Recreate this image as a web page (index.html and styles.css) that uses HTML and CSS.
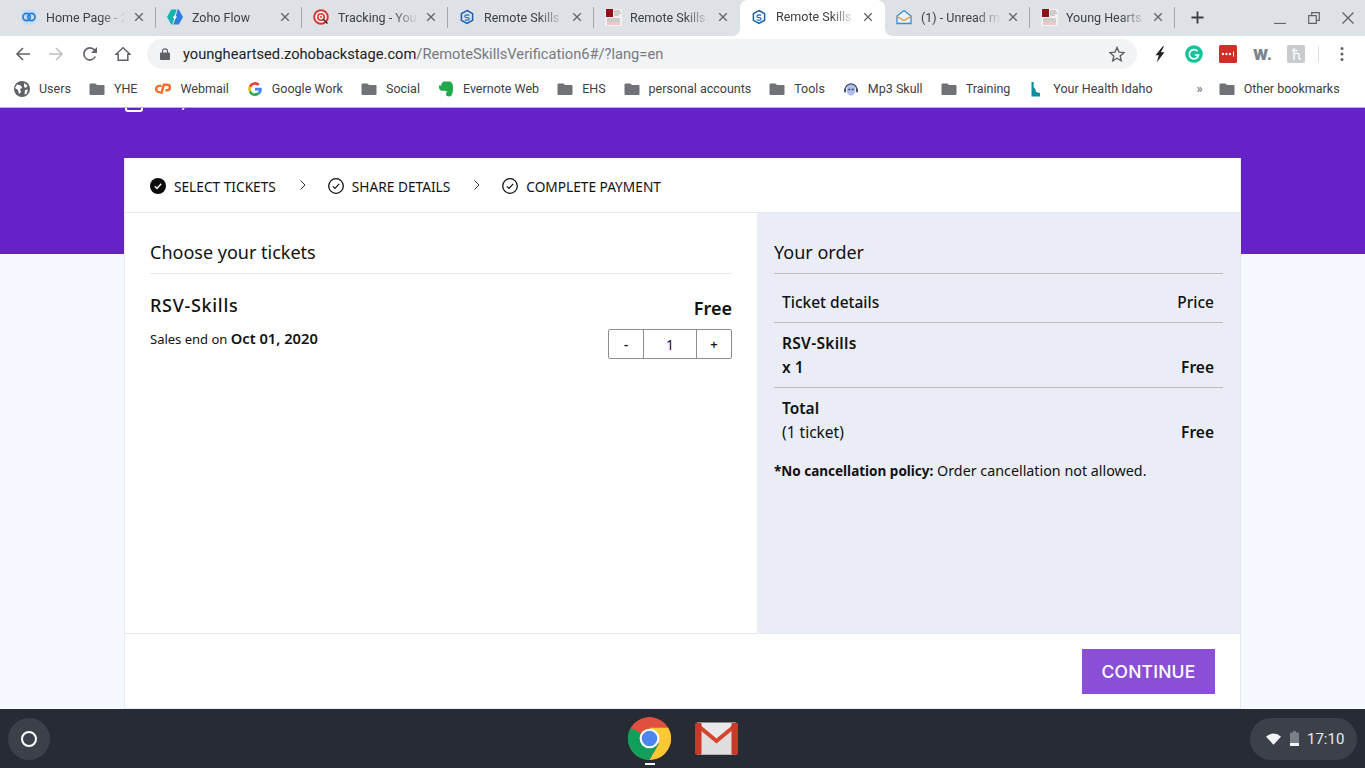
FILE: index.html
```html
<!DOCTYPE html>
<html lang="en">
<head>
<meta charset="utf-8">
<title>Remote Skills Verification</title>
<link rel="stylesheet" href="styles.css">
</head>
<body>
<svg class="defs" width="0" height="0" aria-hidden="true">
  <symbol id="x" viewBox="0 0 12 12"><path d="M1.5 1.5l9 9M10.500 1.5l-9 9" fill="none" stroke="#5f6368" stroke-width="1.5"/></symbol>
  <symbol id="folder" viewBox="0 0 16 16"><path d="M1.5 2.500h5l1.500 1.500h6.500a1 1 0 0 1 1 1v8a1 1 0 0 1-1 1h-13a1 1 0 0 1-1-1v-9.500a1 1 0 0 1 1-1z" fill="#6f7276"/></symbol>
  <symbol id="bs" viewBox="0 0 16 16"><path d="M8 1.500l5.600 3.200v6.600L8 14.500l-5.600-3.200V4.700z" fill="none" stroke="#1c5fa8" stroke-width="1.500"/><path d="M10.300 6H7.200a1.300 1.300 0 0 0 0 2.600h1.600a1.300 1.300 0 0 1 0 2.600H5.800" fill="none" stroke="#2a78c8" stroke-width="1.300"/></symbol>
  <symbol id="thumb" viewBox="0 0 17 17"><rect width="17" height="17" fill="#f5efef"/><rect x="1" y="0" width="7" height="8" fill="#8f1218"/><path d="M9 2h6M9 4h7M9 6h5M2 10h13M2 12h13" stroke="#a8a8a8" stroke-width="1"/><rect x="2" y="13" width="13" height="3" fill="#ecc9c9"/></symbol>
  <symbol id="tick" viewBox="0 0 16 16"><circle cx="8" cy="8" r="7.300" fill="none" stroke="#111" stroke-width="1.300"/><path d="M4.800 8.300l2.200 2.200 4.200-4.700" fill="none" stroke="#111" stroke-width="1.200"/></symbol>
  <symbol id="chev" viewBox="0 0 8 12"><path d="M1.500 1.500L6 6l-4.500 4.500" fill="none" stroke="#333" stroke-width="1"/></symbol>
</svg>

<div class="tabstrip">
  <div class="tab">
    <svg class="favicon" viewBox="0 0 16 16"><circle cx="8" cy="8" r="8" fill="#c4dcf5"/><circle cx="5.600" cy="8" r="3.600" fill="none" stroke="#2b7fd0" stroke-width="1.700"/><circle cx="10.400" cy="8" r="3.600" fill="none" stroke="#2b7fd0" stroke-width="1.700"/></svg>
    <span class="tab-title">Home Page - 2</span><svg class="tab-x"><use href="#x"/></svg>
  </div>
  <div class="tab">
    <svg class="favicon" viewBox="0 0 16 16"><path d="M4.200.5H9.500L5.500 15.500H4.200L0 8z" fill="#12b5b0"/><path d="M10.500.5h1.300L16 8l-4.200 7.500H6.500z" fill="#2f7de1"/><path d="M9.800 3L8 7.500h2L6.300 13l1.300-4H5.800z" fill="#fff"/></svg>
    <span class="tab-title">Zoho Flow</span><svg class="tab-x"><use href="#x"/></svg>
  </div>
  <div class="tab">
    <svg class="favicon" viewBox="0 0 16 16"><circle cx="8" cy="8" r="6.800" fill="#fff" stroke="#d9372f" stroke-width="2"/><circle cx="8" cy="8" r="3.200" fill="#fff" stroke="#d9372f" stroke-width="1.600"/><circle cx="8" cy="8" r="1" fill="#d9372f"/><path d="M10 10l4.500 4.500" stroke="#333" stroke-width="1.600"/></svg>
    <span class="tab-title">Tracking - You</span><svg class="tab-x"><use href="#x"/></svg>
  </div>
  <div class="tab">
    <svg class="favicon"><use href="#bs"/></svg>
    <span class="tab-title">Remote Skills</span><svg class="tab-x"><use href="#x"/></svg>
  </div>
  <div class="tab tab-noline">
    <svg class="favicon favicon-thumb"><use href="#thumb"/></svg>
    <span class="tab-title">Remote Skills</span><svg class="tab-x"><use href="#x"/></svg>
  </div>
  <div class="tab tab-narrow tab-active">
    <svg class="favicon"><use href="#bs"/></svg>
    <span class="tab-title">Remote Skills</span><svg class="tab-x"><use href="#x"/></svg>
  </div>
  <div class="tab tab-narrow">
    <svg class="favicon" viewBox="0 0 16 16"><path d="M1 7l7-5.500L15 7v7.500H1z" fill="#e6f1fb" stroke="#3a8ad6" stroke-width="1.300"/><path d="M1 7.500l7 4 7-4" fill="none" stroke="#e8912d" stroke-width="1.300"/></svg>
    <span class="tab-title">(1) - Unread m</span><svg class="tab-x"><use href="#x"/></svg>
  </div>
  <div class="tab tab-narrow">
    <svg class="favicon favicon-thumb"><use href="#thumb"/></svg>
    <span class="tab-title">Young Hearts</span><svg class="tab-x"><use href="#x"/></svg>
  </div>
  <svg class="newtab" viewBox="0 0 14 14"><path d="M7 .5v13M.5 7h13" stroke="#3c4043" stroke-width="2" fill="none"/></svg>
  <div class="winctl">
    <svg viewBox="0 0 12 12" class="win"><path d="M0 11.500h12" stroke="#5f6368" stroke-width="1.200" fill="none"/></svg>
    <svg viewBox="0 0 12 12" class="win"><path d="M.7 3.700h7.600v7.600H.7zM3.700 3.700V.7h7.600v7.600H8.300" stroke="#5f6368" stroke-width="1.200" fill="none"/></svg>
    <svg viewBox="0 0 12 12" class="win"><path d="M.5.500l11 11M11.500.500l-11 11" stroke="#5f6368" stroke-width="1.300" fill="none"/></svg>
  </div>
</div>

<div class="toolbar">
  <svg class="nav" viewBox="0 0 16 16"><path d="M15 8H2M8 2L2 8l6 6" fill="none" stroke="#5f6368" stroke-width="1.600"/></svg>
  <svg class="nav nav-fwd" viewBox="0 0 16 16"><path d="M1 8h13M8 2l6 6-6 6" fill="none" stroke="#bdc1c6" stroke-width="1.600"/></svg>
  <svg class="nav" viewBox="0 0 16 16"><path d="M13.300 10.500A6 6 0 1 1 12.500 4L14.500 6" fill="none" stroke="#5f6368" stroke-width="1.600"/><path d="M15 1v6H9z" fill="#5f6368"/></svg>
  <svg class="nav nav-home" viewBox="0 0 16 16"><path d="M8 1.800L1 8.300h2.200V14.300h9.600V8.300H15z" fill="none" stroke="#5f6368" stroke-width="1.500"/></svg>
  <div class="omnibox">
    <svg class="lock" viewBox="0 0 10 12"><path d="M2.500 5V3.300a2.500 2.500 0 0 1 5 0V5" fill="none" stroke="#5f6368" stroke-width="1.200"/><rect y="4.500" width="10" height="7.500" rx="1" fill="#5f6368"/></svg>
    <span class="url"><span class="url-host">youngheartsed.zohobackstage.com</span>/RemoteSkillsVerification6#/?lang=en</span>
    <svg class="star" viewBox="0 0 16 16"><path d="M8 1.500l2 4.600 5 .5-3.800 3.300 1.100 4.900L8 12.200l-4.300 2.600 1.100-4.900L1 6.600l5-.5z" fill="none" stroke="#5f6368" stroke-width="1.400"/></svg>
  </div>
  <div class="exts">
    <svg class="ext" viewBox="0 0 16 16"><path d="M10.500 1L4 9h3L5 15.500 12 6.500H8.800L11.500 1z" fill="#222"/></svg>
    <svg class="ext" viewBox="0 0 18 18"><circle cx="9" cy="9" r="8.800" fill="#15c39a"/><path d="M12.500 6.300A4.600 4.600 0 1 0 13.500 10H9.800" fill="none" stroke="#fff" stroke-width="1.700"/></svg>
    <svg class="ext" viewBox="0 0 18 18"><rect width="18" height="18" rx="1.500" fill="#d32d27"/><circle cx="4" cy="9" r="1.200" fill="#fff"/><circle cx="7.500" cy="9" r="1.200" fill="#fff"/><circle cx="11" cy="9" r="1.200" fill="#fff"/><path d="M14.500 6.500v5" stroke="#fff" stroke-width="1"/></svg>
    <span class="ext-w">W.</span>
    <svg class="ext ext-last" viewBox="0 0 18 18"><rect width="18" height="18" rx="2" fill="#c9cbcd"/><path d="M5 5.500h5M7 3v12M7 9.500c2-2 5-2 5 .5v3c0 1 1 1.500 2 1" fill="none" stroke="#fff" stroke-width="1.300"/></svg>
    <span class="ext-sep"></span>
    <svg class="kebab" viewBox="0 0 4 16"><circle cx="2" cy="2.500" r="1.500" fill="#5f6368"/><circle cx="2" cy="8" r="1.500" fill="#5f6368"/><circle cx="2" cy="13.500" r="1.500" fill="#5f6368"/></svg>
  </div>
</div>

<div class="bookmarks">
  <div class="bm bm-users"><svg class="bm-ic" viewBox="0 0 16 16"><circle cx="8" cy="8" r="8" fill="#5f6368"/><path d="M3 3.500l4 1 1 2.500-2 1 1 3-2 2-1-4-3-2zM10 2l3.500 2.500-1.500 2.500-2-1zM11 9l3-.5-1.500 4.500-2 .5z" fill="#fff"/></svg>Users</div>
  <div class="bm"><svg class="bm-ic"><use href="#folder"/></svg>YHE</div>
  <div class="bm"><svg class="bm-ic" viewBox="0 0 18 12"><path d="M7.500 2.500H4.800a3.500 3.500 0 0 0 0 7H6.500" fill="none" stroke="#f4702c" stroke-width="2.700"/><path d="M7 11.500L10 1.200h3.800a3.100 3.100 0 0 1 0 6.200h-2" fill="none" stroke="#f4702c" stroke-width="2.700"/></svg>Webmail</div>
  <div class="bm"><svg class="bm-ic" viewBox="0 0 16 16"><path d="M14.800 8.200c0-.5 0-1-.1-1.400H8v2.700h3.800a3.300 3.300 0 0 1-1.400 2.100l2.200 1.700c1.300-1.200 2.200-3 2.200-5.100z" fill="#4285f4"/><path d="M8 15c1.900 0 3.400-.6 4.600-1.700l-2.200-1.700c-.6.400-1.400.7-2.400.7a4.200 4.200 0 0 1-3.900-2.900L1.800 11.100A7 7 0 0 0 8 15z" fill="#34a853"/><path d="M4.100 9.400a4.300 4.300 0 0 1 0-2.800L1.800 4.900a7 7 0 0 0 0 6.200z" fill="#fbbc05"/><path d="M8 3.800c1 0 2 .4 2.700 1.100l2-2A7 7 0 0 0 1.800 4.900l2.300 1.700A4.200 4.200 0 0 1 8 3.800z" fill="#ea4335"/></svg>Google Work</div>
  <div class="bm"><svg class="bm-ic"><use href="#folder"/></svg>Social</div>
  <div class="bm"><svg class="bm-ic" viewBox="0 0 16 16"><path d="M3.500 2.500L5.500 .5h5.500c2.800 0 4 2.200 4 6.500s-.7 8.500-3.800 8.500c-2.300 0-3.200-1-3.200-2.700s1.200-2.200 2.700-1.700c-1.800-.8-3-.3-3.700-1.300C5.500 9.500 2 10.500 1.200 7.500.9 6.500 1 5.300 1 4.500h2.500z" fill="#1ea94b"/></svg>Evernote Web</div>
  <div class="bm"><svg class="bm-ic"><use href="#folder"/></svg>EHS</div>
  <div class="bm"><svg class="bm-ic"><use href="#folder"/></svg>personal accounts</div>
  <div class="bm"><svg class="bm-ic"><use href="#folder"/></svg>Tools</div>
  <div class="bm"><svg class="bm-ic" viewBox="0 0 16 16"><path d="M2 9a6 6 0 0 1 12 0" fill="none" stroke="#45506a" stroke-width="1.400"/><ellipse cx="8" cy="9" rx="4.500" ry="5.500" fill="#a9bdf0"/><circle cx="6.300" cy="8.500" r="1.100" fill="#45506a"/><circle cx="9.700" cy="8.500" r="1.100" fill="#45506a"/><rect x="1" y="7.500" width="2" height="4" rx="1" fill="#45506a"/><rect x="13" y="7.500" width="2" height="4" rx="1" fill="#45506a"/></svg>Mp3 Skull</div>
  <div class="bm"><svg class="bm-ic"><use href="#folder"/></svg>Training</div>
  <div class="bm"><svg class="bm-ic" viewBox="0 0 16 16"><path d="M3.500 1h2.200v5L7.500 8.500l.5 2.500 2 .5 2 .5v3.500H3.500z" fill="#0f8f9c"/></svg>Your Health Idaho</div>
  <div class="bm-more">»</div>
  <div class="bm bm-other"><svg class="bm-ic"><use href="#folder"/></svg>Other bookmarks</div>
</div>

<main class="page">
  <div class="band">
    <div class="clipped">
      <span class="clipped-box"></span>
      <span class="clipped-tick"></span>
    </div>
  </div>
  <section class="card">
    <nav class="steps">
      <span class="step"><svg class="step-ic" viewBox="0 0 16 16"><circle cx="8" cy="8" r="8" fill="#0b0b0b"/><path d="M4.800 8.300l2.200 2.200 4.200-4.700" fill="none" stroke="#fff" stroke-width="1.400"/></svg>SELECT TICKETS</span>
      <svg class="step-chev"><use href="#chev"/></svg>
      <span class="step"><svg class="step-ic"><use href="#tick"/></svg>SHARE DETAILS</span>
      <svg class="step-chev"><use href="#chev"/></svg>
      <span class="step"><svg class="step-ic"><use href="#tick"/></svg>COMPLETE PAYMENT</span>
    </nav>
    <div class="panels">
      <div class="choose">
        <h2 class="panel-title">Choose your tickets</h2>
        <div class="ticket">
          <div class="ticket-info">
            <h3 class="ticket-name">RSV-Skills</h3>
            <p class="ticket-sales">Sales end on <b class="ticket-date">Oct 01, 2020</b></p>
          </div>
          <div class="ticket-buy">
            <div class="ticket-price">Free</div>
            <div class="qty"><span class="qty-btn">-</span><span class="qty-val">1</span><span class="qty-btn">+</span></div>
          </div>
        </div>
      </div>
      <aside class="order">
        <h2 class="panel-title order-title">Your order</h2>
        <div class="order-row order-head"><span>Ticket details</span><span>Price</span></div>
        <div class="order-row order-item">
          <div><div class="strong strong-name">RSV-Skills</div><div class="strong">x 1</div></div>
          <span class="strong">Free</span>
        </div>
        <div class="order-row order-item order-last">
          <div><div class="strong">Total</div><div>(1 ticket)</div></div>
          <span class="strong">Free</span>
        </div>
        <p class="policy"><b class="policy-b">*No cancellation policy:</b> Order cancellation not allowed.</p>
      </aside>
    </div>
    <footer class="card-foot"><button class="continue" type="button">CONTINUE</button></footer>
  </section>
</main>

<div class="shelf">
  <div class="shelf-left"><span class="launcher"><span class="launcher-ring"></span></span></div>
  <div class="shelf-apps">
    <span class="app">
      <svg class="app-ic" viewBox="0 0 48 48"><circle cx="24" cy="24" r="24" fill="#e0503f"/><path d="M24 24L3.200 12A24 24 0 0 0 24 48l0 0 10.400-18z" fill="#10a05c"/><path d="M24 12h20.800A24 24 0 0 1 24 48l10.400-18z" fill="#fcc934"/><circle cx="24" cy="24" r="11" fill="#fff"/><circle cx="24" cy="24" r="8.700" fill="#4a86ee"/></svg>
      <span class="app-dot"></span>
    </span>
    <span class="app">
      <svg class="gmail" viewBox="0 0 43 33"><rect x="1" y="0.500" width="41" height="32" rx="1.500" fill="#e9e9e9"/><path d="M6 32.500V6L21.500 19 37 6v26.500" fill="#dedede"/><path d="M1 2L21.500 19 42 2" fill="none" stroke="#d4452f" stroke-width="4"/><rect x="0" y="1" width="6.500" height="31.500" rx="1.200" fill="#c8392a"/><rect x="36.500" y="1" width="6.500" height="31.500" rx="1.200" fill="#c8392a"/></svg>
    </span>
  </div>
  <div class="shelf-right">
    <div class="tray">
      <svg class="wifi" viewBox="0 0 16 12"><path d="M0 3.500A11.500 11.500 0 0 1 16 3.500L8 12z" fill="#f1f3f4"/></svg>
      <svg class="battery" viewBox="0 0 9 15"><rect x="3" width="3" height="2" fill="#7b7f87"/><rect y="1.500" width="9" height="13.500" rx="1" fill="#7b7f87"/><rect y="12" width="9" height="3" fill="#f1f3f4"/></svg>
      <span class="clock">17:10</span>
    </div>
  </div>
</div>
</body>
</html>
```

FILE: styles.css
```css
* { box-sizing: border-box; }
html, body { margin: 0; padding: 0; height: 100%; }
body {
  width: 1365px;
  height: 768px;
  overflow: hidden;
  display: flex;
  flex-direction: column;
  font-family: Roboto, "Liberation Sans", sans-serif;
  background: #fff;
}
.defs { display: block; height: 0; }

/* tab strip */
.tabstrip {
  flex: none;
  height: 36px;
  background: #dee1e6;
  display: flex;
  align-items: flex-start;
  padding-left: 10px;
}
.tab {
  width: 146px;
  height: 21px;
  margin-top: 7px;
  flex: none;
  display: flex;
  align-items: center;
  padding: 0 0 1px 11px;
  border-right: 1px solid #a4a8ad;
  font-size: 12.500px;
  color: #3c4043;
}
.tab-narrow { width: 145px; }
.tab-noline { border-right-color: transparent; }
.tab-active {
  height: 36px;
  margin-top: 0;
  padding-bottom: 3px;
  background: #fff;
  border-radius: 8px 8px 0 0;
  border-right-color: transparent;
  position: relative;
}
.tab-active::before,
.tab-active::after {
  content: "";
  position: absolute;
  bottom: 0;
  width: 8px;
  height: 8px;
}
.tab-active::before { left: -8px; background: radial-gradient(circle at 0 0, transparent 8px, #fff 8px); }
.tab-active::after { right: -9px; background: radial-gradient(circle at 100% 0, transparent 8px, #fff 8px); }
.favicon { width: 16px; height: 16px; flex: none; margin-right: 9px; }
.favicon-thumb { width: 17px; height: 17px; margin-right: 8px; }
.tab-title {
  width: 80px;
  flex: none;
  white-space: nowrap;
  -webkit-mask-image: linear-gradient(to right, #000 68%, transparent 100%);
  mask-image: linear-gradient(to right, #000 68%, transparent 100%);
}
.tab-x { width: 10px; height: 10px; flex: none; margin-left: auto; margin-right: 11px; }
.newtab { width: 13px; height: 13px; margin: 11px 0 0 16px; flex: none; }
.winctl { margin-left: auto; height: 36px; display: flex; align-items: center; gap: 22px; padding-right: 11px; }
.win { width: 12px; height: 12px; display: block; }

/* toolbar */
.toolbar {
  flex: none;
  height: 36px;
  background: #fff;
  display: flex;
  align-items: center;
  padding-left: 15px;
}
.nav { width: 16px; height: 16px; flex: none; margin-right: 17px; }
.nav-fwd { margin-right: 18px; }
.nav-home { margin-right: 16px; }
.omnibox {
  width: 990px;
  height: 30px;
  flex: none;
  background: #f1f3f4;
  border-radius: 15px;
  display: flex;
  align-items: center;
  padding: 0 12px 0 13px;
}
.lock { width: 10px; height: 12px; flex: none; margin-right: 13px; }
.url { font-size: 14.670px; color: #757a80; white-space: nowrap; }
.url-host { color: #202124; }
.star { width: 16px; height: 16px; margin-left: auto; }
.exts { display: flex; align-items: center; flex: 1; padding-left: 14px; }
.ext { width: 18px; height: 18px; flex: none; margin-right: 16px; }
.ext-last { margin-right: 13px; }
.ext-w { width: 18px; margin-right: 16px; font-family: Inter, Roboto, sans-serif; font-weight: 900; font-size: 14px; color: #7b848c; }
.ext-sep { width: 1px; height: 16px; background: #dadce0; margin-right: 21px; }
.kebab { width: 4px; height: 16px; }

/* bookmarks */
.bookmarks {
  flex: none;
  height: 36px;
  background: #fff;
  border-bottom: 1px solid #b4b6ba;
  display: flex;
  align-items: center;
  padding: 0 0 2px 14px;
  font-size: 12.500px;
  color: #3c4043;
}
.bm { display: flex; align-items: center; margin-right: 18px; white-space: nowrap; }
.bm-ic { width: 16px; height: 16px; flex: none; margin-right: 9px; }
.bm-more { margin-left: 26px; font-size: 13px; color: #5f6368; }
.bm-other { margin-left: 16px; margin-right: 0; }

/* page */
.page {
  flex: 1;
  min-height: 0;
  background: #f5f9ff;
  overflow: hidden;
}
.band {
  height: 146px;
  background: #6522c6;
  overflow: hidden;
}
.clipped { margin: -10px 0 0 125px; display: flex; align-items: flex-end; gap: 41px; }
.clipped-box {
  display: block;
  width: 18px;
  height: 14px;
  border: 2px solid #fff;
  border-radius: 3px;
}
.clipped-tick { display: block; width: 2px; height: 12px; background: #e6d9f7; margin-bottom: 2px; transform: skewX(-20deg); }
.card {
  width: 1117px;
  height: 551px;
  margin: -96px auto 0;
  background: #fff;
  border: 1px solid #e4eaf2;
  border-top: 0;
  display: flex;
  flex-direction: column;
  font-family: "Noto Sans", Roboto, sans-serif;
  color: #111;
}
.steps {
  flex: none;
  height: 55px;
  border-bottom: 1px solid #e4eaf2;
  display: flex;
  align-items: center;
  padding: 2px 0 0 25px;
  font-size: 13.700px;
}
.step { display: flex; align-items: center; white-space: nowrap; }
.step-ic { width: 16px; height: 16px; flex: none; margin-right: 8px; }
.step-chev { width: 8px; height: 12px; margin: -2px 21px 0 23px; flex: none; }
.panels { flex: 1; min-height: 0; display: flex; }
.choose { width: 632px; flex: none; padding: 27px 25px 0; }
.panel-title {
  margin: 0;
  height: 34px;
  font-size: 18px;
  line-height: 25px;
  font-weight: 400;
  border-bottom: 1px solid #e4eaf2;
}
.ticket { display: flex; justify-content: space-between; padding-top: 19px; }
.ticket-name { margin: 0; font-size: 18px; line-height: 24px; font-weight: 500; letter-spacing: .7px; }
.ticket-sales { margin: 11px 0 0; font-size: 13px; line-height: 20px; }
.ticket-date { font-size: 14.700px; font-weight: 600; }
.ticket-buy { display: flex; flex-direction: column; align-items: flex-end; }
.ticket-price { font-size: 18px; line-height: 24px; font-weight: 600; margin-top: 3px; }
.qty {
  margin-top: 9px;
  width: 124px;
  height: 30px;
  border: 1px solid #8b8e94;
  border-radius: 2px;
  display: flex;
  font-size: 14px;
}
.qty-btn { width: 34px; flex: none; display: flex; align-items: center; justify-content: center; font-weight: 600; font-size: 13px; }
.qty-val {
  flex: 1;
  display: flex;
  align-items: center;
  justify-content: center;
  border-left: 1px solid #8b8e94;
  border-right: 1px solid #8b8e94;
}
.order {
  flex: 1;
  min-width: 0;
  background: #eaedf5;
  padding: 27px 17px 0;
  font-size: 15.500px;
  line-height: 24px;
}
.order-title { border-bottom-color: #bcbdc0; }
.order-row {
  display: flex;
  justify-content: space-between;
  align-items: flex-end;
  padding: 8px 9px 8px 8px;
  border-bottom: 1px solid #bcbdc0;
}
.order-head { height: 49px; font-weight: 500; }
.order-item { height: 65px; }
.order-last { border-bottom: 0; padding-bottom: 9px; }
.strong { font-weight: 600; }
.strong-name { letter-spacing: .3px; }
.policy { margin: 6px 0 0; font-size: 14.300px; line-height: 24px; }
.policy-b { font-size: 13.500px; font-weight: 700; }
.card-foot {
  flex: none;
  height: 75px;
  border-top: 1px solid #e4eaf2;
  display: flex;
  justify-content: flex-end;
  align-items: flex-start;
  padding: 15px 25px 0 0;
}
.continue {
  width: 133px;
  height: 45px;
  border: 0;
  background: #8a4fd6;
  color: #fff;
  font-family: Inter, Roboto, sans-serif;
  font-size: 17.500px;
  font-weight: 500;
  letter-spacing: .2px;
  padding: 0;
}

/* shelf */
.shelf {
  flex: none;
  height: 59px;
  background: #272b33;
  display: flex;
  align-items: center;
}
.shelf-left, .shelf-right { flex: 1; display: flex; }
.shelf-right { justify-content: flex-end; padding-right: 8px; }
.shelf-left { padding-left: 8px; }
.launcher {
  width: 42px;
  height: 42px;
  border-radius: 50%;
  background: #3c4048;
  display: flex;
  align-items: center;
  justify-content: center;
}
.launcher-ring { width: 16px; height: 16px; border: 2px solid #fff; border-radius: 50%; }
.shelf-apps { display: flex; gap: 24px; align-items: center; }
.app { width: 43px; height: 43px; display: flex; align-items: center; justify-content: center; position: relative; }
.app-ic { width: 43px; height: 43px; display: block; }
.app-dot {
  position: absolute;
  left: 17px;
  top: 46px;
  width: 10px;
  height: 2px;
  background: #f1f3f4;
}
.gmail { width: 43px; height: 33px; display: block; }
.tray {
  width: 107px;
  height: 42px;
  border-radius: 21px;
  background: #3c4048;
  display: flex;
  align-items: center;
  padding-left: 16px;
}
.wifi { width: 15px; height: 12px; flex: none; margin-right: 9px; }
.battery { width: 9px; height: 15px; flex: none; margin-right: 8px; }
.clock { font-size: 15px; padding-top: 1px; color: #e8eaed; }
```
